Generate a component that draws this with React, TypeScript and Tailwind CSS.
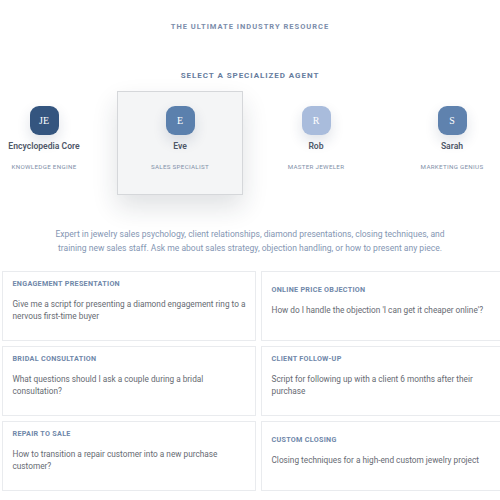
const agents = [
  { initials: 'JE', name: 'Encyclopedia Core', role: 'KNOWLEDGE ENGINE', color: 'bg-[#34557f]', active: false },
  { initials: 'E', name: 'Eve', role: 'SALES SPECIALIST', color: 'bg-[#5b80ad]', active: true },
  { initials: 'R', name: 'Rob', role: 'MASTER JEWELER', color: 'bg-[#a9bcdc]', active: false },
  { initials: 'S', name: 'Sarah', role: 'MARKETING GENIUS', color: 'bg-[#5f82ae]', active: false },
]

const prompts = [
  ['ENGAGEMENT PRESENTATION', 'Give me a script for presenting a diamond engagement ring to a nervous first-time buyer'],
  ['ONLINE PRICE OBJECTION', "How do I handle the objection 'I can get it cheaper online'?"],
  ['BRIDAL CONSULTATION', 'What questions should I ask a couple during a bridal consultation?'],
  ['CLIENT FOLLOW-UP', 'Script for following up with a client 6 months after their purchase'],
  ['REPAIR TO SALE', 'How to transition a repair customer into a new purchase customer?'],
  ['CUSTOM CLOSING', 'Closing techniques for a high-end custom jewelry project'],
]

export default function App() {
  return (
    <div className="w-[500px] h-[500px] overflow-hidden bg-white font-['Roboto',sans-serif] antialiased">
      <p className="pt-[21px] text-center text-[7.5px] leading-[11px] font-bold tracking-[1px] text-[#7b8dab]">
        THE ULTIMATE INDUSTRY RESOURCE
      </p>

      <p className="mt-[38px] text-center text-[8px] leading-[12px] font-bold tracking-[0.95px] text-[#667c9e]">
        SELECT A SPECIALIZED AGENT
      </p>

      {/* Agents */}
      <div className="mt-[9px] -ml-[19px] flex gap-[10px]">
        {agents.map((a) => (
          <div
            key={a.name}
            className={`w-[126px] h-[104px] shrink-0 flex flex-col items-center pt-[14px] ${
              a.active ? 'bg-[#f4f5f6] border border-[#d5d7da] shadow-[0_12px_24px_rgba(30,40,60,0.14)]' : 'border border-transparent'
            }`}
          >
            <div
              className={`w-[29px] h-[29px] rounded-[9px] flex items-center justify-center text-white text-[10px] font-['Liberation_Serif',serif] shadow-[0_6px_14px_rgba(30,50,90,0.14)] ${a.color}`}
            >
              {a.initials}
            </div>
            <p className="mt-[4px] text-[8.6px] leading-[14px] font-semibold text-[#4e5768] whitespace-nowrap">{a.name}</p>
            <p className="mt-[10px] text-[6.2px] leading-[9px] tracking-[0.05em] text-[#8190a8] whitespace-nowrap">{a.role}</p>
          </div>
        ))}
      </div>

      <div className="mt-[32px] text-center text-[8.55px] leading-[14px] text-[#8496b3]">
        <p>Expert in jewelry sales psychology, client relationships, diamond presentations, closing techniques, and</p>
        <p>training new sales staff. Ask me about sales strategy, objection handling, or how to present any piece.</p>
      </div>

      {/* Prompt cards */}
      <div className="mt-[16px] ml-[2px] w-[510px] grid grid-cols-[254px_254px] gap-x-[5px] gap-y-[5px]">
        {prompts.map(([title, text]) => (
          <div
            key={title}
            className="h-[70px] border border-[#e9ebee] bg-white px-[9.5px] pb-[11px] flex flex-col justify-center"
          >
            <p className="text-[7.2px] leading-[10px] font-bold tracking-[0.04em] text-[#6f87a9]">{title}</p>
            <p className="mt-[10px] w-[235px] text-[8.25px] leading-[11.5px] text-[#666a72]">{text}</p>
          </div>
        ))}
      </div>
    </div>
  )
}
